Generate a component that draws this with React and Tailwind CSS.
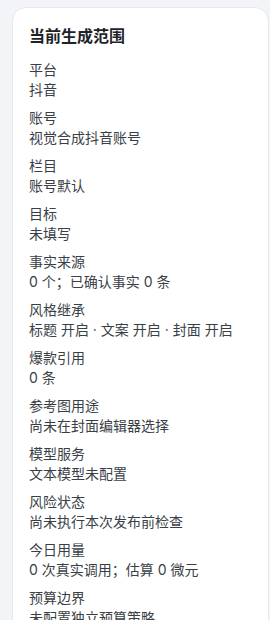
import React from "react";

const rows = [
  ["平台", "抖音"],
  ["账号", "视觉合成抖音账号"],
  ["栏目", "账号默认"],
  ["目标", "未填写"],
  ["事实来源", "0 个；已确认事实 0 条"],
  ["风格继承", "标题 开启 · 文案 开启 · 封面 开启"],
  ["爆款引用", "0 条"],
  ["参考图用途", "尚未在封面编辑器选择"],
  ["模型服务", "文本模型未配置"],
  ["风险状态", "尚未执行本次发布前检查"],
  ["今日用量", "0 次真实调用；估算 0 微元"],
  ["预算边界", "未配置独立预算策略"],
];

export default function App() {
  return (
    <div
      className="min-h-screen bg-[#f3f4f8] pl-3 pt-[7px] overflow-hidden"
      style={{ fontFamily: 'Inter, "Noto Sans CJK SC", sans-serif' }}
    >
      <div className="w-[257px] rounded-[14px] border border-[#e6e8ee] bg-white px-4 pt-4 pb-4">
        <h3 className="text-[16px] leading-6 font-bold text-[#1f2329]">
          当前生成范围
        </h3>
        <div className="mt-3 flex flex-col gap-2">
          {rows.map(([label, value]) => (
            <div key={label} className="text-[14px] leading-5 text-[#3a3f47]">
              <div>{label}</div>
              <div>{value}</div>
            </div>
          ))}
        </div>
      </div>
    </div>
  );
}
